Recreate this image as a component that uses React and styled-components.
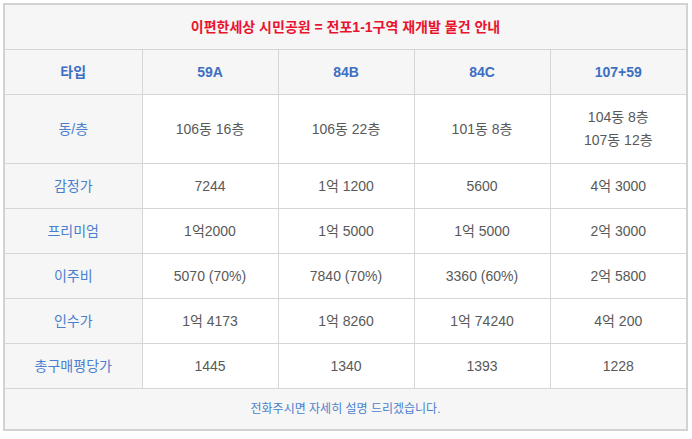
import React from 'react'
import styled, { createGlobalStyle } from 'styled-components'

const GlobalStyle = createGlobalStyle`
  body {
    margin: 0;
    background: #fff;
    font-family: "Liberation Sans", "Noto Sans CJK KR", sans-serif;
  }
`

const Page = styled.div`
  padding: 3px 4px 0 3px;
`

const Table = styled.table`
  width: 685px;
  border-collapse: collapse;
  table-layout: fixed;
  border: 2px solid #d2d2d2;
`

const Col = styled.col`
  width: ${p => p.w}px;
`

const Cell = styled.td`
  border: 1px solid #d6d6d6;
  text-align: center;
  vertical-align: middle;
  padding: 0;
  height: ${p => p.h || 44}px;
  background: ${p => (p.shade ? '#f6f6f6' : '#fff')};
  color: #595959;
  font-size: 14px;
  line-height: 23px;
`

const TitleCell = styled(Cell)`
  color: #e8142f;
  font-weight: bold;
  font-size: 14px;
`

const HeadCell = styled(Cell)`
  color: #3c6fc2;
  font-weight: bold;
  font-size: 14px;
`

const LabelCell = styled(Cell)`
  color: #4a7fcf;
`

const FootCell = styled(Cell)`
  color: #4a7fcf;
  font-size: 12px;
`

const Line = styled.div`
  display: block;
`

const types = ['59A', '84B', '84C', '107+59']
const widths = [138, 136, 136, 136, 137]

const rows = [
  { label: '동/층', values: ['106동 16층', '106동 22층', '101동 8층', ['104동 8층', '107동 12층']], h: 68 },
  { label: '감정가', values: ['7244', '1억 1200', '5600', '4억 3000'] },
  { label: '프리미엄', values: ['1억2000', '1억 5000', '1억 5000', '2억 3000'] },
  { label: '이주비', values: ['5070 (70%)', '7840 (70%)', '3360 (60%)', '2억 5800'] },
  { label: '인수가', values: ['1억 4173', '1억 8260', '1억 74240', '4억 200'] },
  { label: '총구매평당가', values: ['1445', '1340', '1393', '1228'] },
]

export default function App() {
  return (
    <Page>
      <GlobalStyle />
      <Table>
        <colgroup>
          {widths.map((w, i) => (
            <Col key={i} w={w} />
          ))}
        </colgroup>
        <tbody>
          <tr>
            <TitleCell colSpan={5} shade h={44}>
              이편한세상 시민공원 = 전포1-1구역 재개발 물건 안내
            </TitleCell>
          </tr>
          <tr>
            <HeadCell shade>타입</HeadCell>
            {types.map(t => (
              <HeadCell key={t} shade>{t}</HeadCell>
            ))}
          </tr>
          {rows.map(r => (
            <tr key={r.label}>
              <LabelCell shade h={r.h}>{r.label}</LabelCell>
              {r.values.map((v, i) => (
                <Cell key={i} h={r.h}>
                  {Array.isArray(v) ? v.map(line => <Line key={line}>{line}</Line>) : v}
                </Cell>
              ))}
            </tr>
          ))}
          <tr>
            <FootCell colSpan={5} shade h={40}>
              전화주시면 자세히 설명 드리겠습니다.
            </FootCell>
          </tr>
        </tbody>
      </Table>
    </Page>
  )
}
